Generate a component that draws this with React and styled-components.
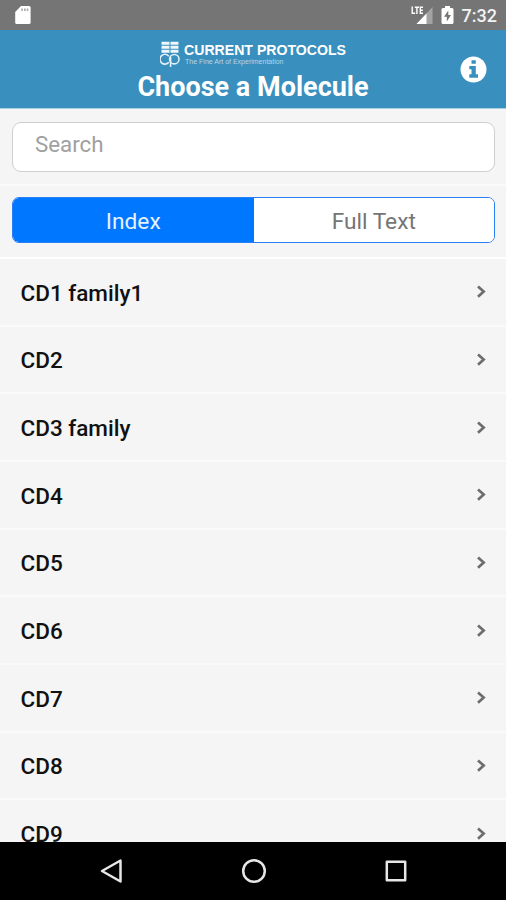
import React from "react";
import styled, { createGlobalStyle } from "styled-components";

const GlobalStyle = createGlobalStyle`
    * {
        box-sizing: border-box;
    }
    body {
        margin: 0;
        font-family: Roboto, sans-serif;
        background-color: #f5f5f5;
    }
`;

const Screen = styled.div`
    display: flex;
    flex-direction: column;
    width: 506px;
    height: 900px;
    overflow: hidden;
    background-color: #f5f5f5;
`;

const StatusBar = styled.div`
    display: flex;
    flex: none;
    align-items: center;
    height: 30px;
    padding: 0 9px 0 15px;
    background-color: #757575;
    color: white;
`;
StatusBar.Icons = styled.div`
    display: flex;
    align-items: center;
    gap: 8px;
    margin-left: auto;
`;
StatusBar.Time = styled.span`
    padding-top: 2px;
    font-size: 18px;
    line-height: 20px;
    font-weight: 500;
    color: #f3f3f3;
`;

const Header = styled.header`
    display: grid;
    flex: none;
    grid-template-columns: 60px 1fr 60px;
    height: 79px;
    background-color: #398fbd;
    border-bottom: 1px solid #a9cfe2;
    color: white;
`;
Header.Center = styled.div`
    display: flex;
    grid-column: 2;
    flex-direction: column;
    align-items: center;
    padding-top: 10px;
`;
Header.Title = styled.h1`
    margin: 0;
    font-size: 27px;
    line-height: 32px;
    font-weight: 700;
    white-space: nowrap;
`;
Header.Info = styled.button`
    display: flex;
    align-items: center;
    justify-content: center;
    padding: 0 5px 0 0;
    border: none;
    background: none;
`;

const Logo = styled.div`
    display: flex;
    height: 31px;
    gap: 4px;
`;
Logo.Words = styled.div`
    padding-top: 2px;
    font-family: "Liberation Sans", Arial, sans-serif;
    white-space: nowrap;
`;
Logo.Name = styled.div`
    font-size: 14.1px;
    line-height: 16px;
    font-weight: 700;
`;
Logo.Tagline = styled.div`
    padding-left: 1px;
    font-size: 7px;
    line-height: 7px;
    color: #b5d7e8;
`;

const Section = styled.div`
    flex: none;
    height: ${(props) => props.$height}px;
    padding: ${(props) => props.$top}px 12px 0;
    border-bottom: ${(props) => props.$line}px solid ${(props) => props.$color};
`;

const SearchInput = styled.input`
    display: block;
    width: 483px;
    height: 50px;
    padding: 0 22px 6px;
    border: 1.5px solid #cfcfcf;
    border-radius: 9px;
    background-color: white;
    font-family: inherit;
    font-size: 22.3px;
    outline: none;

    &::placeholder {
        color: #a0a0a0;
        opacity: 1;
    }
`;

const Segment = styled.div`
    display: grid;
    grid-template-columns: 1fr 1fr;
    width: 483px;
    height: 46px;
    border: 1px solid #2980f5;
    border-radius: 7px;
    overflow: hidden;
`;
Segment.Button = styled.button`
    padding: 2px 0 0;
    border: none;
    background-color: ${(props) => (props.$active ? "#0077ff" : "white")};
    color: ${(props) => (props.$active ? "#e6f2ff" : "#757575")};
    font-family: inherit;
    font-size: 22.7px;
`;

const List = styled.div`
    flex: 1;
    min-height: 0;
    overflow: hidden;
`;
List.Row = styled.div`
    display: flex;
    align-items: center;
    justify-content: space-between;
    height: 67.67px;
    padding: 1px 20px 0;
    border-bottom: 2px solid #fafafa;
    color: #111;
    font-size: 22.5px;
    font-weight: 500;
`;
List.Label = styled.span`
    padding: 1px 0 0 0.5px;
`;

const NavBar = styled.nav`
    display: flex;
    flex: none;
    align-items: center;
    justify-content: space-between;
    height: 58px;
    padding: 0 97px 0 98px;
    background-color: black;
`;

const SdCard = () => (
    <svg width="16" height="20" viewBox="0 0 16 20">
        <path d="M6 1h8q1.600 0 1.600 1.600v14.800q0 1.600-1.600 1.600H1.800Q.2 19 .2 17.400V7z" fill="#fff" />
        <path d="M7 3.500v2.500M9.800 3.500v2.500M12.500 3.500v2.500" stroke="#aaa" strokeWidth="1.600" />
    </svg>
);

const Signal = () => (
    <svg width="24" height="22" viewBox="0 0 24 22">
        <path d="M23.500 3v17H7.500z" fill="#a3a3a3" />
        <path d="M17.500 9.500V20H7.500z" fill="#fff" />
        <path d="M3.200 2.500v6.800h3M5.800 3.200h4.200M7.900 3.200V10M14 3.200h-2.700v6.100H14M11.300 6.200h2.500" fill="none" stroke="#fff" strokeWidth="1.400" />
    </svg>
);

const Battery = () => (
    <svg width="13" height="20" viewBox="0 0 13 20">
        <path d="M4 1h5v2h2q1.500 0 1.500 1.500v13Q12.500 19 11 19H2Q.5 19 .5 17.500v-13Q.5 3 2 3h2z" fill="#fff" />
        <path d="M7.300 5.500L3 11.800h2.800v4.700L10 10H7.300z" fill="#757575" />
    </svg>
);

const LogoMark = () => (
    <svg width="20" height="28" viewBox="0 0 20 28" fill="none">
        <path d="M1.500 3.300h8M10.500 3.300h8M1.500 7.200h8M10.500 7.200h8M1.500 11.200h8M10.500 11.200h8" stroke="#eef7fb" strokeWidth="3" />
        <path d="M8.800 16.200A4.900 4.900 0 1 0 8.800 22.200" stroke="#e2f1f8" strokeWidth="1.600" />
        <circle cx="14.300" cy="19.200" r="4.700" stroke="#e2f1f8" strokeWidth="1.600" />
        <path d="M10.600 17v10" stroke="#e2f1f8" strokeWidth="1.600" />
    </svg>
);

const InfoIcon = () => (
    <svg width="27" height="27" viewBox="0 0 27 27">
        <circle cx="13.500" cy="13.500" r="13" fill="#fff" />
        <path d="M11.500 4.300h4.300v3.500h-4.300zM9.300 10h6.500v8.300H18v3.400H9.300v-3.400h2.200v-5H9.300z" fill="#398fbd" />
    </svg>
);

const Chevron = () => (
    <svg width="10" height="16" viewBox="0 0 10 16">
        <path d="M2 2.400l5.700 5.200L2 12.800" fill="none" stroke="#6d6d6d" strokeWidth="2.700" />
    </svg>
);

const NavIcon = ({ children }) => (
    <svg width="26" height="26" viewBox="0 0 26 26" fill="none" stroke="#e6e6e6" strokeWidth="2.500" strokeLinejoin="round">
        {children}
    </svg>
);

const molecules = ["CD1 family1", "CD2", "CD3 family", "CD4", "CD5", "CD6", "CD7", "CD8", "CD9"];

const App = () => {
    return (
        <Screen>
            <GlobalStyle />
            <StatusBar>
                <SdCard />
                <StatusBar.Icons>
                    <Signal />
                    <Battery />
                    <StatusBar.Time>7:32</StatusBar.Time>
                </StatusBar.Icons>
            </StatusBar>
            <Header>
                <Header.Center>
                    <Logo>
                        <LogoMark />
                        <Logo.Words>
                            <Logo.Name>CURRENT PROTOCOLS</Logo.Name>
                            <Logo.Tagline>The Fine Art of Experimentation</Logo.Tagline>
                        </Logo.Words>
                    </Logo>
                    <Header.Title>Choose a Molecule</Header.Title>
                </Header.Center>
                <Header.Info aria-label="Info">
                    <InfoIcon />
                </Header.Info>
            </Header>
            <Section $height={77} $top={13} $line={2} $color="#fafafa">
                <SearchInput placeholder="Search" />
            </Section>
            <Section $height={73} $top={11} $line={2} $color="#ffffff">
                <Segment>
                    <Segment.Button $active>Index</Segment.Button>
                    <Segment.Button>Full Text</Segment.Button>
                </Segment>
            </Section>
            <List>
                {molecules.map((name) => (
                    <List.Row key={name}>
                        <List.Label>{name}</List.Label>
                        <Chevron />
                    </List.Row>
                ))}
            </List>
            <NavBar>
                <NavIcon>
                    <path d="M22.500 2.500v21L4 13z" />
                </NavIcon>
                <NavIcon>
                    <circle cx="13" cy="13" r="10.800" />
                </NavIcon>
                <NavIcon>
                    <path d="M3.800 3.800h18.400v18.400H3.800z" />
                </NavIcon>
            </NavBar>
        </Screen>
    );
};

export default App;
